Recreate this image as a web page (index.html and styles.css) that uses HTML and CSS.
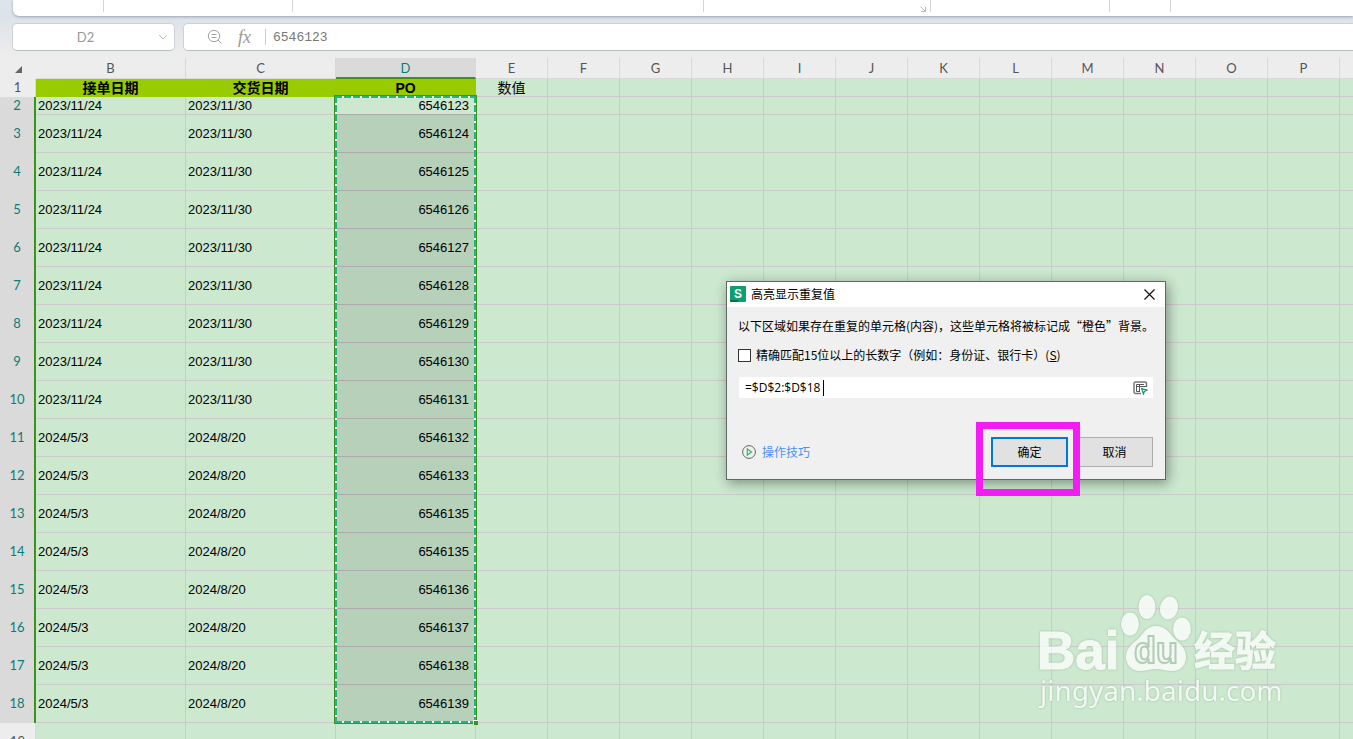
FILE: index.html
```
<!DOCTYPE html>
<html lang="zh">
    <head>
        <meta charset="utf-8">
        <title>高亮显示重复值</title>
        <link rel="stylesheet" href="styles.css">
    </head>
    <body>
        <div class="ribbon">
            <span class="group g1"></span>
            <span class="group g2"></span>
            <span class="group g3"></span>
            <span class="group g4">
                <svg width="6" height="6" viewBox="0 0 6 6"><path d="M0.5 0.5L5 5M5.5 1v4.5H1" fill="none" stroke="#bbb"/></svg>
            </span>
            <span class="group g5"></span>
            <span class="group g6"></span>
        </div>

        <div class="formula-row">
            <div class="name-box">
                <input type="text" value="D2" aria-label="名称框">
                <svg width="10" height="6" viewBox="0 0 10 6"><path d="M1 1l4 4 4-4" fill="none" stroke="#bbb"/></svg>
            </div>
            <div class="formula-bar">
                <svg width="16" height="16" viewBox="0 0 16 16" fill="none" stroke="#a0a0a0">
                    <circle cx="7" cy="7" r="5.7"/>
                    <path d="M4.500 5.500h5M4.500 8.500h5M11 11l3.500 3.500"/>
                </svg>
                <span class="fx">fx</span>
                <input type="text" value="6546123" aria-label="编辑栏">
            </div>
        </div>

        <div class="sheet">
            <table>
                <colgroup>
                    <col class="w-num"><col class="w-date"><col class="w-date"><col class="w-po">
                    <col class="w-std"><col class="w-std"><col class="w-std"><col class="w-std">
                    <col class="w-std"><col class="w-std"><col class="w-std"><col class="w-std">
                    <col class="w-std"><col class="w-std"><col class="w-std"><col class="w-std"><col>
                </colgroup>
                <thead>
                    <tr>
                        <th class="corner"><svg width="7" height="7" viewBox="0 0 7 7"><path d="M7 0v7H0z" fill="#666"/></svg></th>
                        <th>B</th><th>C</th><th class="active">D</th><th>E</th><th>F</th><th>G</th><th>H</th><th>I</th>
                        <th>J</th><th>K</th><th>L</th><th>M</th><th>N</th><th>O</th><th>P</th><th></th>
                    </tr>
                </thead>
                <tbody id="rows">
                    <tr class="short">
                        <th>1</th>
                        <td class="title">接单日期</td><td class="title">交货日期</td><td class="title">PO</td><td class="value">数值</td>
                        <td></td><td></td><td></td><td></td><td></td><td></td><td></td><td></td><td></td><td></td><td></td><td></td>
                    </tr>
                </tbody>
            </table>
            <div class="ants"><span class="handle"></span></div>
        </div>

        <div class="watermark">
            <svg width="250" height="124" viewBox="0 0 250 124">
                <g fill="#fff">
                    <text class="bai" x="1" y="79">Bai</text>
                    <ellipse cx="94" cy="34" rx="9" ry="11.500"/>
                    <ellipse cx="111" cy="17" rx="8.500" ry="12"/>
                    <ellipse cx="133" cy="18" rx="9" ry="11.500" transform="rotate(12 133 18)"/>
                    <ellipse cx="146" cy="39" rx="9" ry="11.500"/>
                    <path d="M120 36c-10 0-12 7-17 12-7 6-13 10-13 19 0 8 6 14 14 14 6 0 10-2 16-2s10 2 16 2c9 0 14-6 14-14 0-9-6-13-12-19-5-5-8-12-18-12z"/>
                    <text class="du" x="98" y="73">du</text>
                    <text class="jing" x="158" y="76">经验</text>
                    <text class="site" x="4" y="111">jingyan.baidu.com</text>
                </g>
            </svg>
        </div>

        <form class="dialog">
            <div class="caption">
                <svg width="16" height="16" viewBox="0 0 16 16">
                    <rect width="16" height="16" rx="1" fill="#0f9f6c"/>
                    <path d="M0 14h8v2H1a1 1 0 0 1-1-1z" fill="#06724a"/>
                    <text class="logo" x="8" y="12">S</text>
                </svg>
                <span>高亮显示重复值</span>
                <button type="button" class="close" aria-label="关闭">
                    <svg width="11" height="11" viewBox="0 0 11 11"><path d="M.5 .5l10 10M10.500 .5l-10 10" stroke="#111" stroke-width="1.200"/></svg>
                </button>
            </div>
            <div class="content">
                <p>以下区域如果存在重复的单元格(内容)，这些单元格将被标记成“橙色”背景。</p>
                <label class="exact"><input type="checkbox"><span>精确匹配15位以上的长数字（例如：身份证、银行卡）(<u>S</u>)</span></label>
                <div class="range">
                    <input type="text" value="=$D$2:$D$18" aria-label="区域">
                    <span class="caret"></span>
                    <button type="button" aria-label="选择区域">
                        <svg width="15" height="14" viewBox="0 0 15 14" fill="none">
                            <path d="M8 12.500H2.500a1.500 1.500 0 0 1-1.500-1.500V2.500A1.500 1.500 0 0 1 2.500 1H12a1.500 1.500 0 0 1 1.500 1.500V6" stroke="#777" stroke-width="1.500"/>
                            <path d="M3 5.500h10M6.500 3v8M3.500 10.500V3.500H11M3.500 10.500H7" stroke="#555"/>
                            <path d="M8.700 7.700l5.300 1.500-2.600 1.300-1 2.500z" stroke="#159a70" stroke-width="1.200" fill="#fff"/>
                        </svg>
                    </button>
                </div>
                <div class="actions">
                    <a href="#">
                        <svg width="14" height="14" viewBox="0 0 14 14" fill="none">
                            <circle cx="7" cy="7" r="6.400" stroke="#666"/>
                            <path d="M5.300 4l4.200 3-4.200 3z" stroke="#2bb673" stroke-width="1.200"/>
                        </svg>
                        操作技巧
                    </a>
                    <button type="button" class="ok">确定</button>
                    <button type="button">取消</button>
                </div>
            </div>
        </form>
        <div class="highlight"></div>

        <script>
            var orders = [
                6546123, 6546124, 6546125, 6546126, 6546127, 6546128, 6546129, 6546130, 6546131,
                6546132, 6546133, 6546135, 6546135, 6546136, 6546137, 6546138, 6546139
            ];
            var rows = document.getElementById("rows");
            var blanks = "<td></td>".repeat(13);

            // Rows 2 to 18 hold the orders
            orders.forEach(function (po, i) {
                var received = i < 9 ? "2023/11/24" : "2024/5/3";
                var delivery = i < 9 ? "2023/11/30" : "2024/8/20";
                var tr = document.createElement("tr");
                tr.className = i === 0 ? "picked short" : "picked";
                tr.innerHTML = "<th>" + (i + 2) + "</th><td>" + received + "</td><td>" + delivery +
                    "</td><td class=\"po\">" + po + "</td>" + blanks;
                rows.appendChild(tr);
            });

            // Empty row below the data
            var last = document.createElement("tr");
            last.innerHTML = "<th>19</th><td></td><td></td><td></td>" + blanks;
            rows.appendChild(last);
        </script>
    </body>
</html>
```
FILE: styles.css
```
* {
    box-sizing: border-box;
}

body {
    margin: 0;
    height: 100vh;
    overflow: hidden;
    position: relative;
    background: linear-gradient(#dde4ec, #dee3ea 20px, #ededed 56px);
    font-family: "Liberation Sans", "Noto Sans CJK SC", sans-serif;
    font-size: 13px;
    color: #000;
}

input,
button {
    font: inherit;
    color: inherit;
    margin: 0;
    padding: 0;
    border: 0;
    outline: 0;
    background: none;
}

/* ribbon and formula bar */
.ribbon {
    display: flex;
    height: 16px;
    margin-left: 13px;
    background: #fff;
    border-radius: 0 0 0 6px;
    box-shadow: 0 1px 3px #9aa3ad;
}

.group {
    height: 12px;
    border-right: 1px solid #d5d5d5;
}

.g1 { width: 91px; }
.g2 { width: 189px; }
.g3 { width: 411px; }
.g4 { width: 227px; }
.g5 { width: 179px; }
.g6 { width: 61px; }

.g4 {
    display: flex;
    justify-content: flex-end;
    align-items: flex-end;
    padding-right: 4px;
}

.formula-row {
    display: flex;
    gap: 8px;
    padding: 7px 0 7px 12px;
}

.name-box,
.formula-bar {
    display: flex;
    align-items: center;
    height: 28px;
    background: #fff;
    border: 1px solid #cdd2d8;
    border-bottom-color: #b9bec3;
    border-radius: 5px;
    color: #999;
}

.name-box {
    width: 163px;
    padding-right: 6px;
}

.name-box input {
    flex: 1;
    min-width: 0;
    text-align: center;
    font-family: Lato, sans-serif;
}

.formula-bar {
    flex: 1;
    border-right: 0;
    border-radius: 5px 0 0 5px;
    padding-left: 23px;
}

.fx {
    margin-left: 15px;
    width: 19px;
    font: italic 18px/20px "Liberation Serif", serif;
    color: #999;
}

.formula-bar input {
    flex: 1;
    height: 16px;
    margin-left: 8px;
    padding-left: 7px;
    border-left: 1px solid #ccc;
    font-family: "Liberation Mono", monospace;
    color: #777;
}

/* sheet */
.sheet {
    position: relative;
}

table {
    width: 100%;
    table-layout: fixed;
    border-collapse: separate;
    border-spacing: 0;
    background: #cce8cf;
}

.w-num { width: 36px; }
.w-date { width: 150px; }
.w-po { width: 140px; }
.w-std { width: 72px; }

th,
td {
    height: 38px;
    padding: 0 2px;
    line-height: 16px;
    white-space: nowrap;
    overflow: hidden;
    border-right: 1px solid #ccc9cc;
    border-bottom: 1px solid #ccc9cc;
}

th {
    font-family: Lato, sans-serif;
    font-weight: normal;
    color: #555;
    background: #ededed;
}

thead th {
    height: 21px;
    border-color: #d9d9d9;
}

th:last-child,
td:last-child {
    border-right: 0;
}

thead .corner {
    border-right: 0;
    border-bottom: 0;
}

.corner svg {
    display: block;
    margin: 2px 0 0 13px;
}

thead .active {
    color: #0b7d77;
    background: #dadada;
    border-right-color: #dadada;
    border-bottom: 2px solid #3c9220;
}

tbody th {
    padding: 0 0 2px;
    border-right: 1px solid #d9d9d9;
    border-bottom: 0;
}

.short th,
.short td {
    height: 18px;
}

.short th {
    line-height: 14px;
}

.picked th {
    color: #0b7d77;
    background: #dadada;
    border-right: 2px solid #3c9220;
}

.title {
    background: #99cc00;
    border-color: #99cc00;
    text-align: center;
    font-weight: bold;
    font-size: 14px;
}

.value {
    padding: 0;
    text-align: center;
    font-size: 14px;
}

.po {
    padding-right: 6px;
    text-align: right;
    background: #b7d0ba;
    border-bottom-color: #adaaae;
}

.short .po {
    background: #cce8cf;
}

/* dashed frame over D2:D18 */
.ants {
    position: absolute;
    left: 334px;
    top: 37px;
    width: 143px;
    height: 629px;
    border: 1px solid #3c9220;
    background:
        repeating-linear-gradient(90deg, #22b57c 0 7px, #fff 7px 9px) 0 0 / 100% 2px no-repeat,
        repeating-linear-gradient(90deg, #22b57c 0 7px, #fff 7px 9px) 0 100% / 100% 2px no-repeat,
        repeating-linear-gradient(#22b57c 0 7px, #fff 7px 9px) 0 0 / 2px 100% no-repeat,
        repeating-linear-gradient(#22b57c 0 7px, #fff 7px 9px) 100% 0 / 2px 100% no-repeat;
}

.handle {
    position: absolute;
    right: -2px;
    bottom: -2px;
    width: 5px;
    height: 5px;
    background: #3c9220;
    border: 1px solid #fff;
    border-width: 1px 0 0 1px;
}

/* watermark */
.watermark {
    position: absolute;
    left: 1036px;
    top: 590px;
    opacity: 0.75;
    filter: drop-shadow(0 0 1px #8fae93);
}

.bai {
    font: bold 53px "Liberation Sans", sans-serif;
    stroke: #fff;
    stroke-width: 1px;
}

.du {
    font: bold 36px "Liberation Sans", sans-serif;
    fill: #fff;
    stroke: #a9c6ad;
    stroke-width: 2px;
}

.jing {
    font: bold 41px "Noto Sans CJK SC", sans-serif;
    stroke: #fff;
    stroke-width: 1px;
}

.site {
    font: 28px "Noto Sans", sans-serif;
}

/* dialog */
.dialog {
    position: absolute;
    left: 726px;
    top: 281px;
    width: 440px;
    background: #f0f0f0;
    border: 1px solid #5e6b60;
    box-shadow: 2px 3px 12px rgba(0, 0, 0, 0.4);
    font-family: "Noto Sans CJK SC", sans-serif;
    font-size: 12px;
    line-height: 18px;
}

.caption {
    display: flex;
    align-items: center;
    gap: 5px;
    height: 25px;
    padding: 0 10px 1px 3px;
    background: #fff;
}

.logo {
    font: bold 12px "Liberation Sans", sans-serif;
    fill: #fff;
    text-anchor: middle;
}

.close {
    display: flex;
    margin-left: auto;
}

.content {
    padding: 10px 12px 12px 11px;
}

.content p {
    margin: 0;
    white-space: nowrap;
}

.exact {
    display: flex;
    align-items: center;
    gap: 5px;
    margin-top: 11px;
    white-space: nowrap;
}

.exact input {
    appearance: none;
    width: 13px;
    height: 13px;
    background: #fff;
    border: 1px solid #333;
}

.exact input:checked {
    background: #0078d7;
}

.range {
    display: flex;
    align-items: center;
    height: 21px;
    margin: 13px 0 0 1px;
    padding: 0 5px 0 6px;
    background: #fff;
    font-family: "Open Sans", sans-serif;
}

.range input {
    width: 78px;
}

.caret {
    width: 1px;
    height: 16px;
    background: #000;
}

.range button {
    display: flex;
    margin-left: auto;
}

.actions {
    display: flex;
    align-items: center;
    gap: 8px;
    margin-top: 39px;
}

.actions a {
    display: flex;
    align-items: center;
    gap: 6px;
    margin-right: auto;
    padding-left: 4px;
    color: #4a90f0;
    text-decoration: none;
}

.actions button {
    width: 77px;
    height: 30px;
    background: #e1e1e1;
    border: 1px solid #adadad;
}

.actions .ok {
    border: 2px solid #0078d7;
}

/* frame round the confirm button */
.highlight {
    position: absolute;
    left: 976px;
    top: 422px;
    width: 104px;
    height: 74px;
    border: 7px solid #f41cf4;
    pointer-events: none;
}
```
